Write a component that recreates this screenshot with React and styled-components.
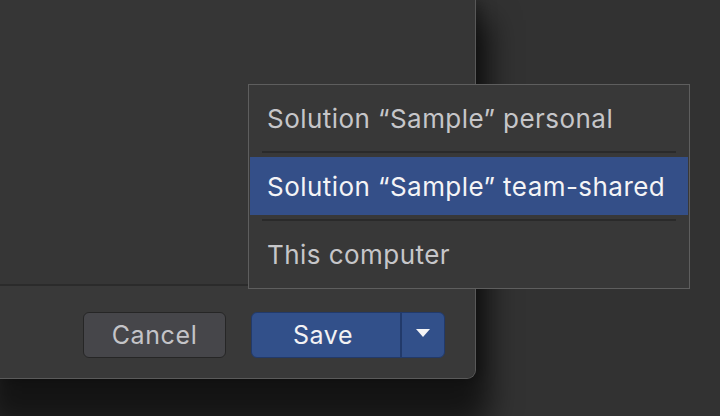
import styled, { createGlobalStyle } from 'styled-components';

const GlobalStyle = createGlobalStyle`
  body {
    margin: 0;
    background: #323232;
    font-family: Inter, "Noto Sans", "Liberation Sans", sans-serif;
    -webkit-font-smoothing: antialiased;
  }
`;

const Screen = styled.div`
  position: relative;
  width: 720px;
  height: 416px;
  overflow: hidden;
  background: #323232;
`;

const Dialog = styled.div`
  display: flex;
  flex-direction: column;
  width: 476px;
  height: 379px;
  box-sizing: border-box;
  background: #363636;
  border-right: 1px solid #585858;
  border-bottom: 1px solid #5a5a5a;
  border-bottom-right-radius: 9px;
  box-shadow: 0 34px 30px 14px rgba(0, 0, 0, 0.6), 4px 0 16px rgba(0, 0, 0, 0.35);
`;

const Content = styled.div`
  flex: 1;
  background: #363636;
  border-bottom: 2px solid #2b2b2b;
`;

const Footer = styled.div`
  display: flex;
  justify-content: flex-end;
  align-items: flex-start;
  gap: 25px;
  height: 92px;
  box-sizing: border-box;
  padding: 26px 30px 0 0;
  background: #393939;
  border-bottom-right-radius: 9px;
`;

const Button = styled.button`
  height: 46px;
  box-sizing: border-box;
  border-radius: 6px;
  font-family: inherit;
  font-size: 25px;
  letter-spacing: 0.6px;
  padding: 0;
  cursor: pointer;
`;

const CancelButton = styled(Button)`
  width: 143px;
  background: #46464a;
  border: 1.5px solid #262626;
  color: #c4c4c8;
`;

const SplitButton = styled.div`
  display: flex;
  width: 194px;
  height: 46px;
  box-sizing: border-box;
  border: 1.5px solid #223a6a;
  border-radius: 6px;
  overflow: hidden;
  background: #32508a;
`;

const SaveButton = styled.button`
  width: 150px;
  border: none;
  border-right: 2px solid #223a6a;
  background: transparent;
  color: #f2f2f4;
  font-family: inherit;
  font-size: 25px;
  letter-spacing: 0.6px;
  padding: 0 6px 0 0;
`;

const ArrowButton = styled.button`
  flex: 1;
  display: flex;
  align-items: center;
  justify-content: center;
  border: none;
  background: transparent;
  padding: 0 0 4px 0;
`;

const Menu = styled.div`
  position: absolute;
  left: 248px;
  top: 84px;
  width: 442px;
  box-sizing: border-box;
  padding: 4px 1px 5px;
  background: #383838;
  border: 1px solid #5e5e5e;
`;

const Item = styled.div`
  display: flex;
  align-items: center;
  height: 58px;
  padding-left: 17px;
  font-size: 26px;
  letter-spacing: 0.45px;
  color: ${({ $active }) => ($active ? '#f4f4f6' : '#c6c6c9')};
  background: ${({ $active }) => ($active ? '#344f88' : 'transparent')};
`;

const Separator = styled.div`
  height: 10px;
  display: flex;
  align-items: center;
  padding: 0 12px;

  &::after {
    content: '';
    flex: 1;
    height: 2px;
    background: #2a2a2a;
  }
`;

const items = [
  'Solution \u201cSample\u201d personal',
  'Solution \u201cSample\u201d team-shared',
  'This computer',
];

export default function App() {
  return (
    <Screen>
      <GlobalStyle />
      <Dialog>
        <Content />
        <Footer>
          <CancelButton>Cancel</CancelButton>
          <SplitButton>
            <SaveButton>Save</SaveButton>
            <ArrowButton>
              <svg width="16" height="10" viewBox="0 0 16 10">
                <path d="M1 1h14L8 9z" fill="#f4f4f6" />
              </svg>
            </ArrowButton>
          </SplitButton>
        </Footer>
      </Dialog>
      <Menu>
        {items.map((label, i) => (
          <div key={label}>
            {i > 0 && <Separator />}
            <Item $active={i === 1}>{label}</Item>
          </div>
        ))}
      </Menu>
    </Screen>
  );
}
